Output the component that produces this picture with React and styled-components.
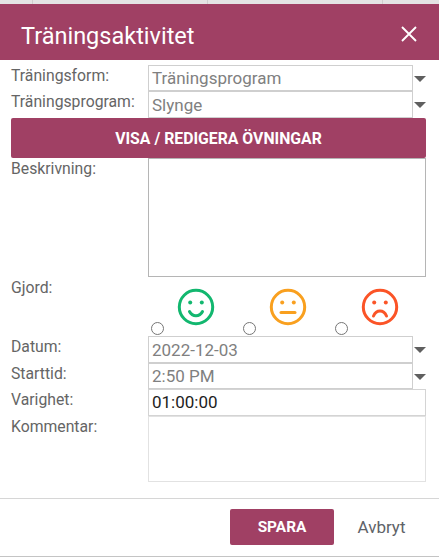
import React from "react";
import styled, { createGlobalStyle } from "styled-components";

const Global = createGlobalStyle`
  html, body { margin: 0; padding: 0; background: #fff; }
  body { font-family: Roboto, "Liberation Sans", sans-serif; }
  * { box-sizing: border-box; }
`;
const Page = styled.div`
  width: 439px; height: 557px; overflow: hidden; display: flex; flex-direction: column; background: #fff;
`;
const TopStrip = styled.div`
  height: 4px; background: #e4e4e4; display: flex; flex: none;
`;
const StripCell = styled.div`
  width: ${p => p.$w}px; border-right: 1px solid #cfcfcf;
`;
const Header = styled.header`
  height: 56px; flex: none; background: #a04064; color: #fff; display: flex; align-items: center;
  justify-content: space-between; padding: 8px 22px 0 21px;
`;
const Title = styled.h1`
  margin: 0; font-size: 23.5px; font-weight: 400; line-height: 28px;
`;
const CloseIcon = styled.svg`
  width: 16px; height: 16px; display: block; margin-top: -5px;
`;
const Form = styled.div`
  flex: none; height: 438px; padding: 5px 13px 0 11px; display: flex; flex-direction: column;
`;
const Row = styled.div`
  display: grid; grid-template-columns: 137px 1fr; height: ${p => p.$h}px; flex: none;
`;
const Label = styled.label`
  font-size: 15.75px; line-height: 20px; color: #656565; padding-top: 1px;
`;
const SelectWrap = styled.div`
  display: flex; align-items: flex-start;
`;
const SelectBox = styled.div`
  width: 265px; height: ${p => p.$h ?? 26}px; border: 1px solid #cfcfcf; background: #fff; color: #808080;
  font-size: 17px; line-height: 24px; padding: ${p => p.$pt ?? 0}px 3px 0;
`;
const Caret = styled.span`
  width: 0; height: 0; margin: 11px 0 0 1px; border-left: 6.5px solid transparent; border-right: 6.5px solid transparent;
  border-top: 6px solid #5f5f5f;
`;
const WideButton = styled.button`
  display: block; width: 415px; height: 40px; flex: none; border: 0; border-radius: 2px; padding: 0; background: #a04064;
  color: #fff; font: 700 15.8px Roboto, sans-serif;
`;
const TextBox = styled.div`
  width: 278px; height: ${p => p.$h}px; border: 1px solid ${p => p.$c};
`;
const Smileys = styled.div`
  display: flex; padding-left: 3px;
`;
const Option = styled.div`
  width: 92.2px; display: flex; align-items: flex-start; gap: 12.5px;
`;
const Radio = styled.span`
  width: 13px; height: 13px; flex: none; margin-top: 45px; border: 1px solid #767676; border-radius: 50%; background: #fff;
`;
const Face = styled.svg`
  width: 38px; height: 38px; flex: none; margin-top: 11px; display: block;
`;
const DurationBox = styled.div`
  width: 278px; height: 27px; border: 1px solid #d4d4d4; color: #1d1d1d; font-size: 17px; line-height: 24px; padding: 0 3px;
`;
const Footer = styled.footer`
  flex: 1; border-top: 1px solid #d6d6d6; border-bottom: 1px solid #c4c4c4; display: flex; align-items: flex-start;
  justify-content: flex-end; padding: 10px 10px 0 0;
`;
const SaveButton = styled.button`
  width: 104px; height: 36px; border: 0; border-radius: 2px; padding: 0; background: #a04064; color: #fff;
  font: 700 15.4px Roboto, sans-serif;
`;
const CancelButton = styled.button`
  width: 95px; height: 36px; border: 0; padding: 0; background: none; color: #5f6368; font: 400 17px Roboto, sans-serif;
`;

const Smile = ({ color, mouth }) => (
  <Face viewBox="0 0 38 38" fill="none" stroke={color} strokeWidth="3" strokeLinecap="round">
    <circle cx="19" cy="19" r="16.7" />
    <circle cx="13.2" cy="14.5" r="2" fill={color} stroke="none" />
    <circle cx="24.8" cy="14.5" r="2" fill={color} stroke="none" />
    <path d={mouth} />
  </Face>
);

const Select = ({ children, h, pt }) => (
  <SelectWrap>
    <SelectBox $h={h} $pt={pt}>{children}</SelectBox>
    <Caret />
  </SelectWrap>
);

export default function App() {
  return (
    <Page>
      <Global />
      <TopStrip>
        <StripCell $w={33} /><StripCell $w={175} /><StripCell $w={175} />
      </TopStrip>
      <Header>
        <Title>Träningsaktivitet</Title>
        <CloseIcon viewBox="0 0 16 16" fill="none" stroke="#fff" strokeWidth="1.9">
          <path d="M1 1 15 15M15 1 1 15" />
        </CloseIcon>
      </Header>
      <Form>
        <Row $h={26}><Label>Träningsform:</Label><Select>Träningsprogram</Select></Row>
        <Row $h={27}><Label>Träningsprogram:</Label><Select h={27} pt={1}>Slynge</Select></Row>
        <WideButton>VISA / REDIGERA ÖVNINGAR</WideButton>
        <Row $h={119}><Label>Beskrivning:</Label><TextBox $h={119} $c="#b5b5b5" /></Row>
        <Row $h={59}>
          <Label>Gjord:</Label>
          <Smileys>
            <Option><Radio /><Smile color="#12b76f" mouth="M12.5 23.5c1.5 3 3.800 4.300 6.500 4.300s5-1.300 6.500-4.300" /></Option>
            <Option><Radio /><Smile color="#f9a01f" mouth="M12 24.500h14" /></Option>
            <Option><Radio /><Smile color="#fb5427" mouth="M12.500 28c1.500-3.500 3.800-5 6.500-5s5 1.500 6.500 5" /></Option>
          </Smileys>
        </Row>
        <Row $h={27}><Label>Datum:</Label><Select h={27} pt={1}>2022-12-03</Select></Row>
        <Row $h={26}><Label>Starttid:</Label><Select>2:50 PM</Select></Row>
        <Row $h={27}><Label>Varighet:</Label><DurationBox>01:00:00</DurationBox></Row>
        <Row $h={66}><Label>Kommentar:</Label><TextBox $h={66} $c="#e2e2e2" /></Row>
      </Form>
      <Footer>
        <SaveButton>SPARA</SaveButton>
        <CancelButton>Avbryt</CancelButton>
      </Footer>
    </Page>
  );
}
